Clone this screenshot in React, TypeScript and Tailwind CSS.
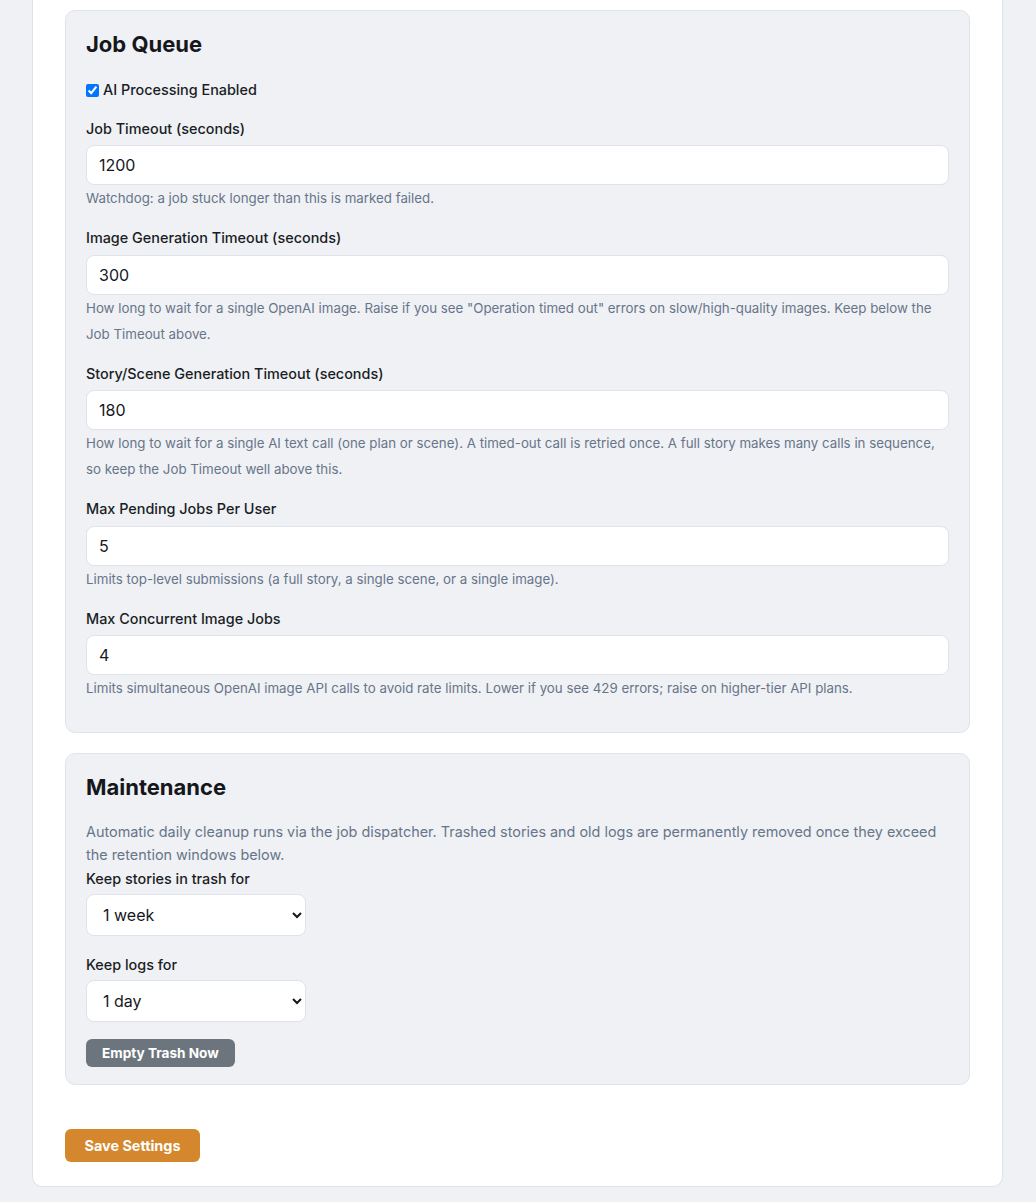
import React from "react";

interface FieldProps {
  label: string;
  value: string;
  help: string;
}

function NumberField({ label, value, help }: FieldProps) {
  return (
    <div className="mb-[15px]">
      <label className="block text-[14.4px] leading-[24px] font-medium text-[#1a1d24] mb-[4.5px]">
        {label}
      </label>
      <input
        type="text"
        defaultValue={value}
        className="block w-full h-[40px] rounded-[8px] border border-[#dfe3eb] bg-white px-3 text-[16px] text-[#16181d] outline-none"
      />
      <p className="text-[13.3px] leading-[26px] text-[#687589]">{help}</p>
    </div>
  );
}

function SelectField({
  label,
  value,
  options,
}: {
  label: string;
  value: string;
  options: string[];
}) {
  return (
    <div className="mb-[17px]">
      <label className="block text-[14.4px] leading-[24px] font-medium text-[#1a1d24] mb-[3px]">
        {label}
      </label>
      <select
        defaultValue={value}
        className="block w-[220px] h-[42px] rounded-[8px] border border-[#dfe3eb] bg-white pl-3 pr-2 text-[16px] text-[#16181d] outline-none"
      >
        {options.map((o) => (
          <option key={o}>{o}</option>
        ))}
      </select>
    </div>
  );
}

export default function App() {
  return (
    <div
      className="min-h-[1202px] bg-[#eff1f5] pb-[15px]"
      style={{ fontFamily: "Inter, 'Noto Sans', sans-serif" }}
    >
      <div className="ml-[32px] w-[971px] bg-white border-x border-b border-[#dde2ea] rounded-b-[10px] px-[32px] pt-[10px] pb-[24px]">
        {/* Job queue */}
        <section className="rounded-[10px] border border-[#dfe3eb] bg-[#eff1f5] px-5 pt-5 pb-[16px]">
          <h2 className="text-[22px] leading-[26px] font-bold text-[#15171c] mb-[21px]">
            Job Queue
          </h2>
          <label className="flex items-center gap-[4px] text-[14.4px] leading-[24px] font-medium text-[#1a1d24] mb-[14.5px]">
            <input
              type="checkbox"
              defaultChecked
              className="w-[13px] h-[13px] m-0 accent-[#0075ff]"
            />
            AI Processing Enabled
          </label>
          <NumberField
            label="Job Timeout (seconds)"
            value="1200"
            help="Watchdog: a job stuck longer than this is marked failed."
          />
          <NumberField
            label="Image Generation Timeout (seconds)"
            value="300"
            help={
              'How long to wait for a single OpenAI image. Raise if you see "Operation timed out" errors on slow/high-quality images. Keep below the Job Timeout above.'
            }
          />
          <NumberField
            label="Story/Scene Generation Timeout (seconds)"
            value="180"
            help="How long to wait for a single AI text call (one plan or scene). A timed-out call is retried once. A full story makes many calls in sequence, so keep the Job Timeout well above this."
          />
          <NumberField
            label="Max Pending Jobs Per User"
            value="5"
            help="Limits top-level submissions (a full story, a single scene, or a single image)."
          />
          <NumberField
            label="Max Concurrent Image Jobs"
            value="4"
            help="Limits simultaneous OpenAI image API calls to avoid rate limits. Lower if you see 429 errors; raise on higher-tier API plans."
          />
        </section>

        {/* Maintenance */}
        <section className="mt-5 rounded-[10px] border border-[#dfe3eb] bg-[#eff1f5] px-5 pt-5 pb-[17px]">
          <h2 className="text-[22px] leading-[26px] font-bold text-[#15171c] mb-[20px]">
            Maintenance
          </h2>
          <p className="text-[14.4px] leading-[23px] text-[#687589] mb-[1px]">
            Automatic daily cleanup runs via the job dispatcher. Trashed stories and old logs are
            permanently removed once they exceed the retention windows below.
          </p>
          <SelectField
            label="Keep stories in trash for"
            value="1 week"
            options={["1 day", "3 days", "1 week", "2 weeks", "1 month"]}
          />
          <SelectField
            label="Keep logs for"
            value="1 day"
            options={["1 day", "3 days", "1 week", "2 weeks", "1 month"]}
          />
          <button className="h-[28px] rounded-[6px] bg-[#6c757d] px-4 text-[13.6px] font-bold text-white">
            Empty Trash Now
          </button>
        </section>

        <button className="mt-[44px] h-[33px] w-[135px] rounded-[6px] bg-[#d4872c] text-[14.4px] font-bold text-white">
          Save Settings
        </button>
      </div>
    </div>
  );
}
